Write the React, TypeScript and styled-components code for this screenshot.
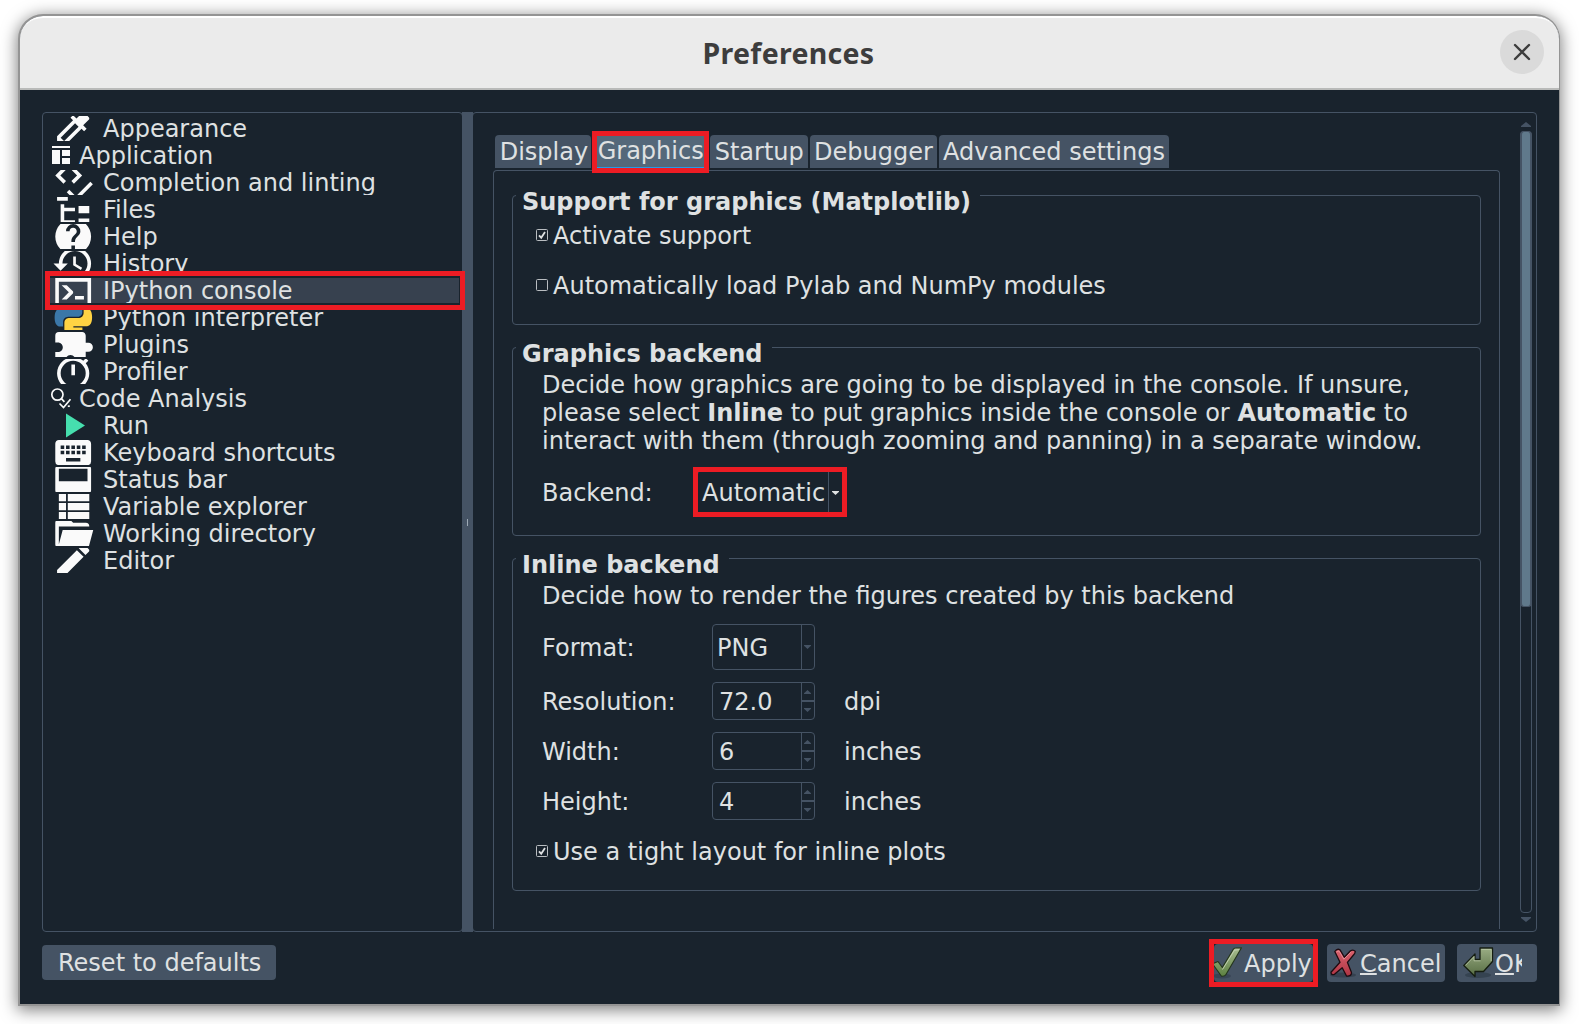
import React from 'react';
import styled, { createGlobalStyle, css } from 'styled-components';

const C = {
  bg: '#19232d',
  line: '#455364',
  text: '#dfe1e2',
  red: '#ed1c24',
  icon: '#fafafa',
};

const Global = createGlobalStyle`
  html, body { margin: 0; padding: 0; background: #fff; overflow: hidden; }
  *, *::before, *::after { box-sizing: border-box; }
  body {
    font-family: "DejaVu Sans", Verdana, sans-serif;
    font-size: 24px;
    line-height: 28px;
    color: ${C.text};
    white-space: nowrap;
  }
`;

const Page = styled.div`
  width: 1579px;
  height: 1024px;
  padding: 14px 19px 0 18px;
  overflow: hidden;
  background: #fff;
`;

const Window = styled.div`
  width: 1542px;
  height: 992px;
  display: flex;
  flex-direction: column;
  border: 2px solid #949494;
  border-right-width: 1px;
  border-radius: 25px 25px 0 0;
  background: ${C.bg};
  box-shadow: 0 3px 16px 1px rgba(0, 0, 0, 0.5);
`;

const Header = styled.header`
  height: 74px;
  flex: none;
  display: grid;
  grid-template-columns: 60px 1fr 60px;
  align-items: center;
  border-top: 2px solid #fff;
  border-bottom: 2px solid #b9bab9;
  border-radius: 23px 23px 0 0;
  background: #ebebeb;
`;

const Title = styled.h1`
  grid-column: 2;
  margin: 0 2px 0 0;
  text-align: center;
  font: 700 28.5px/36px "Noto Sans", "Open Sans", sans-serif;
  letter-spacing: 0.3px;
  color: #3d3d3d;
`;

const CloseButton = styled.button`
  width: 44px;
  height: 44px;
  margin: 0 0 2px 1px;
  padding: 0;
  display: grid;
  place-items: center;
  border: 0;
  border-radius: 50%;
  background: #dadada;
`;

const Body = styled.div`
  flex: 1;
  padding: 22px 22px 0;
  display: flex;
  flex-direction: column;
`;

const Split = styled.div`
  height: 820px;
  display: flex;
`;

const SideList = styled.ul`
  width: 421px;
  margin: 0;
  padding: 3px 3px 0 7px;
  list-style: none;
  border: 1px solid ${C.line};
  border-radius: 4px;
`;

const Handle = styled.div`
  width: 11px;
  margin: 0 -1px;
  display: grid;
  place-items: center;
  background: ${C.line};
  &::after {
    content: '';
    width: 1px;
    height: 7px;
    background: #9da9b5;
  }
`;

const redFrame = css`
  content: '';
  position: absolute;
  border: 5px solid ${C.red};
  z-index: 2;
  pointer-events: none;
`;

const Item = styled.li<{ $selected?: boolean }>`
  position: relative;
  height: 25px;
  margin-bottom: 2px;
  background: ${(p) => (p.$selected ? '#37414f' : 'transparent')};
  ${(p) =>
    p.$selected &&
    css`
      &::after {
        ${redFrame}
        left: -5px;
        right: -6px;
        top: -7px;
        bottom: -7px;
      }
    `}
`;

const ItemClip = styled.div`
  height: 25px;
  display: flex;
  overflow: hidden;
`;

const ItemLabel = styled.span`
  margin-top: -1px;
`;

const Glyph = styled.svg<{ $small?: boolean }>`
  flex: none;
  width: ${(p) => (p.$small ? 22 : 44)}px;
  height: 25px;
  margin: ${(p) => (p.$small ? '0 7px 0 0' : '0 8px 0 1px')};
  fill: ${C.icon};
`;

const Content = styled.section`
  flex: 1;
  display: flex;
  border: 1px solid ${C.line};
  border-radius: 4px;
`;

const Pane = styled.div`
  width: 1007px;
  margin: 22px 0 2px 20px;
  display: flex;
  flex-direction: column;
`;

const Tabs = styled.nav`
  height: 35px;
  padding-left: 2px;
  display: flex;
  gap: 2px;
`;

const Tab = styled.div<{ $w: number; $active?: boolean }>`
  position: relative;
  width: ${(p) => p.$w}px;
  height: 33px;
  padding: ${(p) => (p.$active ? 2 : 3)}px 0 0 ${(p) => (p.$w < 120 ? 4.7 : 4)}px;
  border-radius: 4px 4px 0 0;
  background: ${(p) => (p.$active ? '#54687a' : C.line)};
  ${(p) =>
    p.$active &&
    css`
      border-bottom: 1px solid #259ae9;
      &::after {
        ${redFrame}
        inset: -4px -1px -6px;
      }
    `}
`;

const TabPage = styled.div`
  flex: 1;
  padding: 24px 18px 0;
  display: flex;
  flex-direction: column;
  gap: 22px;
  border: 1px solid ${C.line};
  border-bottom: 0;
  border-radius: 4px 4px 0 0;
`;

const Group = styled.section<{ $h: number }>`
  height: ${(p) => p.$h}px;
  display: flex;
  flex-direction: column;
  align-items: flex-start;
  border: 1px solid ${C.line};
  border-radius: 4px;
`;

const GroupTitle = styled.h2`
  margin: -8px 0 0 3px;
  padding: 0 9px 0 6px;
  font: inherit;
  font-weight: 700;
  background: ${C.bg};
`;

const Text = styled.p`
  margin: 3px 0 0 29px;
`;

const Check = styled.label<{ $top: number }>`
  margin: ${(p) => p.$top}px 0 0 22px;
  display: flex;
  align-items: center;
  gap: 4px;
  svg {
    margin-bottom: 2px;
  }
`;

const Field = styled.div<{ $top: number }>`
  margin: ${(p) => p.$top}px 0 0 29px;
  display: grid;
  grid-template-columns: 170px 103px auto;
  align-items: center;
`;

const FieldLabel = styled.span<{ $up?: boolean }>`
  padding: ${(p) => (p.$up ? '0 0 1px' : '1px 0 0')};
`;

const Unit = styled.span`
  padding: 1px 0 0 29px;
`;

const Combo = styled.div`
  width: 103px;
  height: 46px;
  display: flex;
  border: 1px solid ${C.line};
  border-radius: 4px;
`;

const BackendCombo = styled(Combo)`
  position: relative;
  width: 147px;
  margin-left: -15px;
  &::after {
    ${redFrame}
    left: -5px;
    right: -4px;
    top: -4px;
    bottom: -2px;
  }
`;

const ComboValue = styled.span<{ $pad?: number; $up?: boolean }>`
  flex: 1;
  align-self: center;
  padding: ${(p) => (p.$up ? '0 0 1px' : '1px 0 0')};
  padding-left: ${(p) => p.$pad ?? 4}px;
`;

const ComboArrow = styled.span<{ $w?: number }>`
  width: ${(p) => p.$w ?? 13}px;
  display: grid;
  place-items: center;
  padding-right: 1px;
  border-left: 1px solid ${C.line};
`;

const Spin = styled(Combo)`
  height: 38px;
`;

const SpinButtons = styled.span`
  width: 13px;
  display: grid;
  grid-template-rows: 1fr 1fr;
  place-items: center;
  padding-right: 1px;
  border-left: 1px solid ${C.line};
  background: linear-gradient(${C.line}, ${C.line}) 0 17px / 100% 2px no-repeat;
`;

const ScrollBar = styled.div`
  width: 12px;
  margin: 9px 0 8px 20px;
  display: flex;
  flex-direction: column;
  align-items: center;
`;

const Track = styled.div`
  width: 12px;
  height: 782px;
  margin: 4px 0;
  border: 1px solid ${C.line};
  border-radius: 4px;
`;

const Thumb = styled.div`
  width: 12px;
  height: 476px;
  margin: -1px 0 0 -1px;
  border: 2px solid ${C.line};
  border-top-width: 1px;
  border-bottom-width: 1px;
  border-radius: 4px;
  background: #60798b;
`;

const Footer = styled.footer`
  margin-top: 12px;
  display: flex;
  align-items: flex-start;
`;

const Button = styled.button<{ $w: number; $h?: number; $pad: number; $gap?: number; $ml?: number; $framed?: boolean }>`
  position: relative;
  width: ${(p) => p.$w}px;
  height: ${(p) => p.$h ?? 38}px;
  margin: ${(p) => (p.$h ? '1px 0 0' : '0')};
  margin-left: ${(p) => p.$ml ?? 0}px;
  padding: ${(p) => (p.$h ? 0 : 1)}px 0 0 ${(p) => p.$pad}px;
  display: flex;
  align-items: center;
  gap: ${(p) => p.$gap ?? 0}px;
  border: 0;
  border-radius: 4px;
  background: ${C.line};
  color: inherit;
  font: inherit;
  text-align: left;
  white-space: nowrap;
  svg {
    margin-bottom: 1px;
  }
  ${(p) =>
    p.$framed &&
    css`
      &::after {
        ${redFrame}
        inset: -5px;
      }
    `}
`;

const Spacer = styled.div`
  flex: 1;
`;

const Cut = styled.span`
  width: 27px;
  overflow: hidden;
`;

const Mnemonic = styled.span`
  text-decoration: underline;
  text-decoration-thickness: 2px;
  text-underline-offset: 1px;
  text-decoration-skip-ink: none;
`;

const ICONS: Record<string, string> = {
  eyedropper:
    'M6.92,19L5,17.08L13.06,9L15,10.94M20.71,5.63L18.37,3.29C18,2.9 17.35,2.9 16.96,3.29L13.84,6.41L11.91,4.5L10.5,5.91L11.92,7.33L3,16.25V21H7.75L16.67,12.08L18.09,13.5L19.5,12.09L17.58,10.17L20.7,7.05C21.1,6.65 21.1,6 20.71,5.63Z',
  codeCheck:
    'M6.59,3.41L2,8L6.59,12.6L8,11.18L4.82,8L8,4.82L6.59,3.41M12.41,3.41L11,4.82L14.18,8L11,11.18L12.41,12.6L17,8L12.41,3.41M21.59,11.59L13.5,19.68L9.83,16L8.42,17.41L13.5,22.5L23,13L21.59,11.59Z',
  fileTree: 'M3,3H9V7H3V3M15,10H21V14H15V10M15,17H21V21H15V17M13,13H7V18H13V20H5V9H7V11H13V13Z',
  help: 'M15.07,11.25L14.17,12.17C13.45,12.89 13,13.5 13,15H11V14.5C11,13.39 11.45,12.39 12.17,11.67L13.41,10.41C13.78,10.05 14,9.55 14,9C14,7.89 13.1,7 12,7A2,2 0 0,0 10,9H8A4,4 0 0,1 12,5A4,4 0 0,1 16,9C16,9.88 15.64,10.67 15.07,11.25M13,19H11V17H13M12,2A10,10 0 0,0 2,12A10,10 0 0,0 12,22A10,10 0 0,0 22,12C22,6.47 17.5,2 12,2Z',
  history:
    'M13.5,8H12V13L16.28,15.54L17,14.33L13.5,12.25V8M13,3A9,9 0 0,0 4,12H1L4.96,16.03L9,12H6A7,7 0 0,1 13,5A7,7 0 0,1 20,12A7,7 0 0,1 13,19C11.07,19 9.32,18.21 8.06,16.94L6.64,18.36C8.27,20 10.5,21 13,21A9,9 0 0,0 22,12A9,9 0 0,0 13,3',
  console:
    'M20,19V7H4V19H20M20,3A2,2 0 0,1 22,5V19A2,2 0 0,1 20,21H4A2,2 0 0,1 2,19V5C2,3.89 2.9,3 4,3H20M13,17V15H18V17H13M9.58,13L5.57,9H8.4L11.7,12.3C12.09,12.69 12.09,13.33 11.7,13.72L8.42,17H5.59L9.58,13Z',
  puzzle:
    'M20.5,11H19V7C19,5.89 18.1,5 17,5H13V3.5A2.5,2.5 0 0,0 10.5,1A2.5,2.5 0 0,0 8,3.5V5H4A2,2 0 0,0 2,7V10.8H3.5C5,10.8 6.2,12 6.2,13.5C6.2,15 5,16.2 3.5,16.2H2V20A2,2 0 0,0 4,22H7.8V20.5C7.8,19 9,17.8 10.5,17.8C12,17.8 13.2,19 13.2,20.5V22H17A2,2 0 0,0 19,20V16H20.5A2.5,2.5 0 0,0 23,13.5A2.5,2.5 0 0,0 20.5,11Z',
  timer:
    'M12,20A7,7 0 0,1 5,13A7,7 0 0,1 12,6A7,7 0 0,1 19,13A7,7 0 0,1 12,20M19.03,7.39L20.45,5.97C20,5.46 19.55,5 19.04,4.56L17.62,6C16.07,4.74 14.12,4 12,4A9,9 0 0,0 3,13A9,9 0 0,0 12,22C17,22 21,17.97 21,13C21,10.88 20.26,8.93 19.03,7.39M11,14H13V8H11M15,1H9V3H15V1Z',
  keyboard:
    'M19,10H17V8H19M19,13H17V11H19M16,10H14V8H16M16,13H14V11H16M16,17H8V15H16M7,10H5V8H7M7,13H5V11H7M8,11H10V13H8M8,8H10V10H8M11,11H13V13H11M11,8H13V10H11M20,5H4C2.89,5 2,5.89 2,7V17A2,2 0 0,0 4,19H20A2,2 0 0,0 22,17V7C22,5.89 21.1,5 20,5Z',
  dock: 'M20 4H4C2.9 4 2 4.9 2 6V18C2 19.11 2.9 20 4 20H20C21.11 20 22 19.11 22 18V6C22 4.9 21.11 4 20 4M20 13H4V6H20V13',
  list: 'M9,5V9H21V5M9,19H21V15H9M9,14H21V10H9M4,9H8V5H4M4,19H8V15H4M4,14H8V10H4V14Z',
  folder:
    'M19,20H4C2.89,20 2,19.1 2,18V6C2,4.89 2.89,4 4,4H10L12,6H19A2,2 0 0,1 21,8H21L4,8V18L6.14,10H23.21L20.93,18.5C20.7,19.37 19.92,20 19,20Z',
  pencil:
    'M20.71,7.04C21.1,6.65 21.1,6 20.71,5.63L18.37,3.29C18,2.9 17.35,2.9 16.96,3.29L15.12,5.12L18.87,8.87M3,17.25V21H6.75L17.81,9.93L14.06,6.18L3,17.25Z',
};

const PY_TOP =
  'M14.25.18l.9.2.73.26.59.3.45.32.34.34.25.34.16.33.1.3.04.26.02.2-.01.13V8.5l-.05.63-.13.55-.21.46-.26.38-.3.31-.33.25-.35.19-.35.14-.33.1-.3.07-.26.04-.21.02H8.77l-.69.05-.59.14-.5.22-.41.27-.33.32-.27.35-.2.36-.15.37-.1.35-.07.32-.04.27-.02.21v3.06H3.17l-.21-.03-.28-.07-.32-.12-.35-.18-.36-.26-.36-.36-.35-.46-.32-.59-.28-.73-.21-.88-.14-1.05-.05-1.23.06-1.22.16-1.04.24-.87.32-.71.36-.57.4-.44.42-.33.42-.24.4-.16.36-.1.32-.05.24-.01h.16l.06.01h8.16v-.83H6.18l-.01-2.75-.02-.37.05-.34.11-.31.17-.28.25-.26.31-.23.38-.2.44-.18.51-.15.58-.12.64-.1.71-.06.77-.04.84-.02 1.27.05z';
const PY_BOTTOM =
  'M21.1 6.11l.28.06.32.12.35.18.36.27.36.35.35.47.32.59.28.73.21.88.14 1.04.05 1.23-.06 1.23-.16 1.04-.24.86-.32.71-.36.57-.4.45-.42.33-.42.24-.4.16-.36.09-.32.05-.24.02-.16-.01h-8.22v.82h5.84l.01 2.76.02.36-.05.34-.11.31-.17.29-.25.25-.31.24-.38.2-.44.17-.51.15-.58.13-.64.09-.71.07-.77.04-.84.01-1.27-.04-1.07-.14-.9-.2-.73-.25-.59-.3-.45-.33-.34-.34-.25-.34-.16-.33-.1-.3-.04-.25-.02-.2.01-.13v-5.34l.05-.64.13-.54.21-.46.26-.38.3-.32.33-.24.35-.2.35-.14.33-.1.3-.06.26-.04.21-.02.13-.01h5.84l.69-.05.59-.14.5-.21.41-.28.33-.32.27-.35.2-.36.15-.36.1-.35.07-.32.04-.28.02-.21V6.07h2.09l.14.01z';

function ItemIcon({ name }: { name: string }) {
  if (name === 'layout')
    return (
      <Glyph $small viewBox="0 0 22 25">
        <path d="M2 3h18v2H2zM2 7h8v14H2zM12 7h8v6h-8zM12 15h8v6h-8z" />
      </Glyph>
    );
  if (name === 'analysis')
    return (
      <Glyph $small viewBox="0 0 22 25" stroke={C.icon} strokeWidth="1.7">
        <circle cx="7.4" cy="8.6" r="5.6" fill="none" />
        <path d="M11.4 12.6l3 3.2M9.5 17.5l4 4 7-8.3" fill="none" />
        <path d="M17.8 20.2h2" />
      </Glyph>
    );
  if (name === 'run')
    return (
      <Glyph viewBox="0 0 44 25">
        <path d="M15 .5L34 12.5L15 24.5z" fill="#46dfae" />
      </Glyph>
    );
  if (name === 'python')
    return (
      <Glyph viewBox="0 0 44 25">
        <g transform="translate(3.7 -6.2) scale(1.55)">
          <path d={PY_TOP} fill="#3b77a8" />
          <path d={PY_BOTTOM} fill="#ffd343" />
        </g>
      </Glyph>
    );
  return (
    <Glyph viewBox="0 0 44 25">
      <path transform="translate(.7 -8.9) scale(1.79)" fillRule="evenodd" d={ICONS[name]} />
    </Glyph>
  );
}

const ITEMS: [string, string][] = [
  ['eyedropper', 'Appearance'],
  ['layout', 'Application'],
  ['codeCheck', 'Completion and linting'],
  ['fileTree', 'Files'],
  ['help', 'Help'],
  ['history', 'History'],
  ['console', 'IPython console'],
  ['python', 'Python interpreter'],
  ['puzzle', 'Plugins'],
  ['timer', 'Profiler'],
  ['analysis', 'Code Analysis'],
  ['run', 'Run'],
  ['keyboard', 'Keyboard shortcuts'],
  ['dock', 'Status bar'],
  ['list', 'Variable explorer'],
  ['folder', 'Working directory'],
  ['pencil', 'Editor'],
];

const TABS: [string, number][] = [
  ['Display', 96],
  ['Graphics', 115],
  ['Startup', 98],
  ['Debugger', 127],
  ['Advanced settings', 230],
];

function Arrow({ up, w = 7, h = 4, color = C.line }: { up?: boolean; w?: number; h?: number; color?: string }) {
  return (
    <svg width={w} height={h} viewBox="0 0 10 5" preserveAspectRatio="none">
      <path d={up ? 'M0 5V4L5 0L10 4V5z' : 'M0 0V1L5 5L10 1V0z'} fill={color} />
    </svg>
  );
}

function CheckBox({ label, checked, top }: { label: string; checked?: boolean; top: number }) {
  return (
    <Check $top={top}>
      <svg width="14" height="14" viewBox="0 0 14 14" fill="none">
        <rect x="1.5" y="1.5" width="11" height="11" rx="1" stroke="#b9bdc1" />
        {checked && <path d="M4 7.3l2.2 2.4L10 4" stroke={C.text} strokeWidth="1.8" />}
      </svg>
      {label}
    </Check>
  );
}

function SpinField({ label, value, unit, top }: { label: string; value: string; unit: string; top: number }) {
  return (
    <Field $top={top}>
      <FieldLabel>{label}</FieldLabel>
      <Spin>
        <ComboValue $pad={6}>{value}</ComboValue>
        <SpinButtons>
          <Arrow up />
          <Arrow />
        </SpinButtons>
      </Spin>
      <Unit>{unit}</Unit>
    </Field>
  );
}

function ApplyIcon() {
  return (
    <svg width="30" height="32" viewBox="0 0 30 32">
      <defs>
        <linearGradient id="ok" x1="0" y1="0" x2="0" y2="1">
          <stop offset="0" stopColor="#a9bd92" />
          <stop offset="1" stopColor="#5c8040" />
        </linearGradient>
      </defs>
      <ellipse cx="8" cy="29" rx="9" ry="2.5" fill="#2c3845" opacity=".5" />
      <path d="M-1 16.5L4 14.5L8.3 20.5L19.5 2Q20.2 1 21.5 1L27.5 .8L12 27.5Q11 29.5 7.5 29.3L-1 17.5z" fill="url(#ok)" stroke="#23341b" strokeWidth="1.1" strokeLinejoin="round" />
      <path d="M8.5 22.5L20.5 3.2L25 2.6" fill="none" stroke="#c7d4b8" strokeWidth=".9" />
    </svg>
  );
}

function CancelIcon() {
  return (
    <svg width="28" height="32" viewBox="0 0 28 32">
      <defs>
        <linearGradient id="no" x1="0" y1="0" x2="0" y2="1">
          <stop offset="0" stopColor="#dc6570" />
          <stop offset="1" stopColor="#ae3443" />
        </linearGradient>
      </defs>
      <ellipse cx="13" cy="28" rx="13" ry="2.5" fill="#26303b" opacity=".5" />
      <path
        d="M4.8 4.5Q7 1.2 10 2.8L14.3 10.2L20.5 3.8Q23.5 2.2 25.3 4.5Q25 6.5 23.5 8L17.4 15.3L21.5 25.5Q21.5 29.5 16.5 29L12.2 20.8L4.5 27.3Q1 28.5 1 25.2L10 15.2z"
        fill="url(#no)"
        stroke="#1d0b10"
        strokeWidth="1.3"
        strokeLinejoin="round"
      />
      <path d="M6.5 5Q8.2 3.2 9.5 4.6L13.8 12.2L21 5.2" fill="none" stroke="#ee9aa2" strokeWidth=".8" />
    </svg>
  );
}

function OkIcon() {
  return (
    <svg width="32" height="32" viewBox="0 0 32 32">
      <defs>
        <linearGradient id="ret" x1="0" y1="0" x2="0" y2="1">
          <stop offset="0" stopColor="#9aad84" />
          <stop offset="1" stopColor="#566c42" />
        </linearGradient>
      </defs>
      <ellipse cx="15" cy="28" rx="13" ry="3" fill="#2c3845" opacity=".6" />
      <path d="M17 1H29.5V14.5L20.5 24.5H12V29.5L.8 18.5L12 7V12.5H17z" fill="url(#ret)" stroke="#151d10" strokeWidth="1.3" strokeLinejoin="round" />
      <path d="M18.2 2.4H28.2V14M17.5 13.8H11V9.5L2.5 18.3" fill="none" stroke="#bccaa9" strokeWidth=".8" />
    </svg>
  );
}

export default function App() {
  return (
    <>
      <Global />
      <Page>
        <Window>
          <Header>
            <Title>Preferences</Title>
            <CloseButton aria-label="Close">
              <svg width="18" height="18" viewBox="0 0 18 18" stroke="#3d3d3d" strokeWidth="2.4" strokeLinecap="round">
                <path d="M2 2l14 14M16 2L2 16" />
              </svg>
            </CloseButton>
          </Header>
          <Body>
            <Split>
              <SideList>
                {ITEMS.map(([icon, label]) => (
                  <Item key={label} $selected={icon === 'console'}>
                    <ItemClip>
                      <ItemIcon name={icon} />
                      <ItemLabel>{label}</ItemLabel>
                    </ItemClip>
                  </Item>
                ))}
              </SideList>
              <Handle />
              <Content>
                <Pane>
                  <Tabs>
                    {TABS.map(([label, w]) => (
                      <Tab key={label} $w={w} $active={label === 'Graphics'}>
                        {label}
                      </Tab>
                    ))}
                  </Tabs>
                  <TabPage>
                    <Group $h={130}>
                      <GroupTitle>Support for graphics (Matplotlib)</GroupTitle>
                      <CheckBox label="Activate support" checked top={6} />
                      <CheckBox label="Automatically load Pylab and NumPy modules" top={22} />
                    </Group>
                    <Group $h={189}>
                      <GroupTitle>Graphics backend</GroupTitle>
                      <Text>
                        Decide how graphics are going to be displayed in the console. If unsure,
                        <br />
                        please select <b>Inline</b> to put graphics inside the console or <b>Automatic</b> to
                        <br />
                        interact with them (through zooming and panning) in a separate window.
                      </Text>
                      <Field $top={15}>
                        <FieldLabel $up>Backend:</FieldLabel>
                        <BackendCombo>
                          <ComboValue $pad={4} $up>
                            Automatic
                          </ComboValue>
                          <ComboArrow $w={15}>
                            <Arrow color={C.text} />
                          </ComboArrow>
                        </BackendCombo>
                      </Field>
                    </Group>
                    <Group $h={333}>
                      <GroupTitle>Inline backend</GroupTitle>
                      <Text>Decide how to render the figures created by this backend</Text>
                      <Field $top={14}>
                        <FieldLabel>Format:</FieldLabel>
                        <Combo>
                          <ComboValue>PNG</ComboValue>
                          <ComboArrow>
                            <Arrow />
                          </ComboArrow>
                        </Combo>
                      </Field>
                      <SpinField label="Resolution:" value="72.0" unit="dpi" top={12} />
                      <SpinField label="Width:" value="6" unit="inches" top={12} />
                      <SpinField label="Height:" value="4" unit="inches" top={12} />
                      <CheckBox label="Use a tight layout for inline plots" checked top={18} />
                    </Group>
                  </TabPage>
                </Pane>
                <ScrollBar>
                  <Arrow up w={10} h={5} />
                  <Track>
                    <Thumb />
                  </Track>
                  <Arrow w={10} h={5} />
                </ScrollBar>
              </Content>
            </Split>
            <Footer>
              <Button $w={234} $h={35} $pad={16}>
                Reset to defaults
              </Button>
              <Spacer />
              <Button $w={99} $pad={0} $framed>
                <ApplyIcon />
                Apply
              </Button>
              <Button $w={118} $pad={3} $gap={2} $ml={14}>
                <CancelIcon />
                <span>
                  <Mnemonic>C</Mnemonic>ancel
                </span>
              </Button>
              <Button $w={80} $pad={6} $ml={12}>
                <OkIcon />
                <Cut>
                  <Mnemonic>O</Mnemonic>K
                </Cut>
              </Button>
            </Footer>
          </Body>
        </Window>
      </Page>
    </>
  );
}
